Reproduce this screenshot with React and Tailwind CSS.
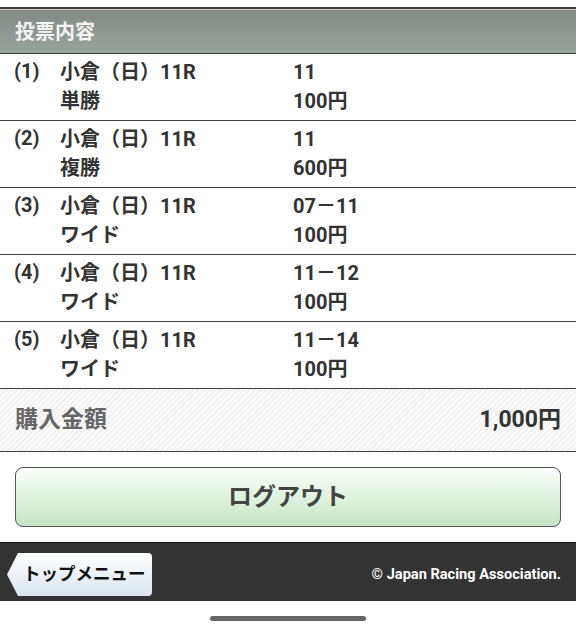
import React from 'react';

const bets = [
  { no: '(1)', race: '小倉（日）11R', type: '単勝', horse: '11', amount: '100円' },
  { no: '(2)', race: '小倉（日）11R', type: '複勝', horse: '11', amount: '600円' },
  { no: '(3)', race: '小倉（日）11R', type: 'ワイド', horse: '07－11', amount: '100円' },
  { no: '(4)', race: '小倉（日）11R', type: 'ワイド', horse: '11－12', amount: '100円' },
  { no: '(5)', race: '小倉（日）11R', type: 'ワイド', horse: '11－14', amount: '100円' },
];

const font = { fontFamily: 'Roboto, "Noto Sans CJK JP", sans-serif' };

const BetRow = ({ bet }) => (
  <div className="flex h-[67px] border-b border-[#444] pt-[4px] pl-[14px] text-[20px] font-bold leading-[29px] text-[#333]">
    <div className="w-[46px] leading-[27px]">{bet.no}</div>
    <div className="w-[233px]">
      <div>{bet.race}</div>
      <div>{bet.type}</div>
    </div>
    <div>
      <div>{bet.horse}</div>
      <div>{bet.amount}</div>
    </div>
  </div>
);

const App = () => {
  return (
    <div className="w-[576px] h-[636px] bg-white overflow-hidden" style={font}>
      <div className="h-[7px]" />
      <div className="h-[47px] flex flex-col border-t-2 border-[#3d3d3d]">
        <div className="flex-1 flex items-center px-[15px] border-t border-[#c9cfcb] border-b border-b-[#3a3a3a] bg-gradient-to-b from-[#838a85] to-[#99a39d]">
          <span className="text-[20px] font-bold text-[#f4f4f4]">投票内容</span>
        </div>
      </div>

      {bets.map((bet) => (
        <BetRow key={bet.no} bet={bet} />
      ))}

      <div className="h-[63px] flex items-center justify-between px-[15px] border-b border-[#444] bg-[repeating-linear-gradient(135deg,#f1f1f1_0px,#f1f1f1_2px,#fbfbfb_2px,#fbfbfb_4px)]">
        <span className="text-[23px] font-bold text-[#666]">購入金額</span>
        <span className="text-[23px] font-bold text-[#333]">1,000円</span>
      </div>

      <div className="px-[15px] pt-[15px]">
        <button className="w-full h-[60px] rounded-[8px] border border-[#555] bg-gradient-to-b from-[#fbfefb] to-[#c4e6c4] text-[24px] font-bold text-[#444]">
          ログアウト
        </button>
      </div>

      <div className="mt-[15px] border-t border-[#111]">
        <div className="h-[58px] flex items-start justify-between pt-[10px] pl-[7px] pr-[15px] bg-[#333]">
          <div className="flex items-center h-[43px]">
            <svg width="15" height="43" viewBox="0 0 15 43" className="block">
              <defs>
                <linearGradient id="tb" x1="0" y1="0" x2="0" y2="1">
                  <stop offset="0" stopColor="#ffffff" />
                  <stop offset="1" stopColor="#dae4ef" />
                </linearGradient>
              </defs>
              <polygon points="15,0 15,43 11,43 0,21.5 11,0" fill="url(#tb)" />
            </svg>
            <div className="h-[43px] flex items-center pl-[1px] pr-[6px] rounded-r-[4px] bg-gradient-to-b from-white to-[#dae4ef] text-[17.5px] font-bold text-[#111]">
              トップメニュー
            </div>
          </div>
          <span className="h-[43px] flex items-center text-[14.6px] font-bold text-white">© Japan Racing Association.</span>
        </div>
      </div>

      <div className="flex justify-center pt-[15px]">
        <div className="w-[156px] h-[5px] rounded-full bg-[#666]" />
      </div>
    </div>
  );
};

export default App;
